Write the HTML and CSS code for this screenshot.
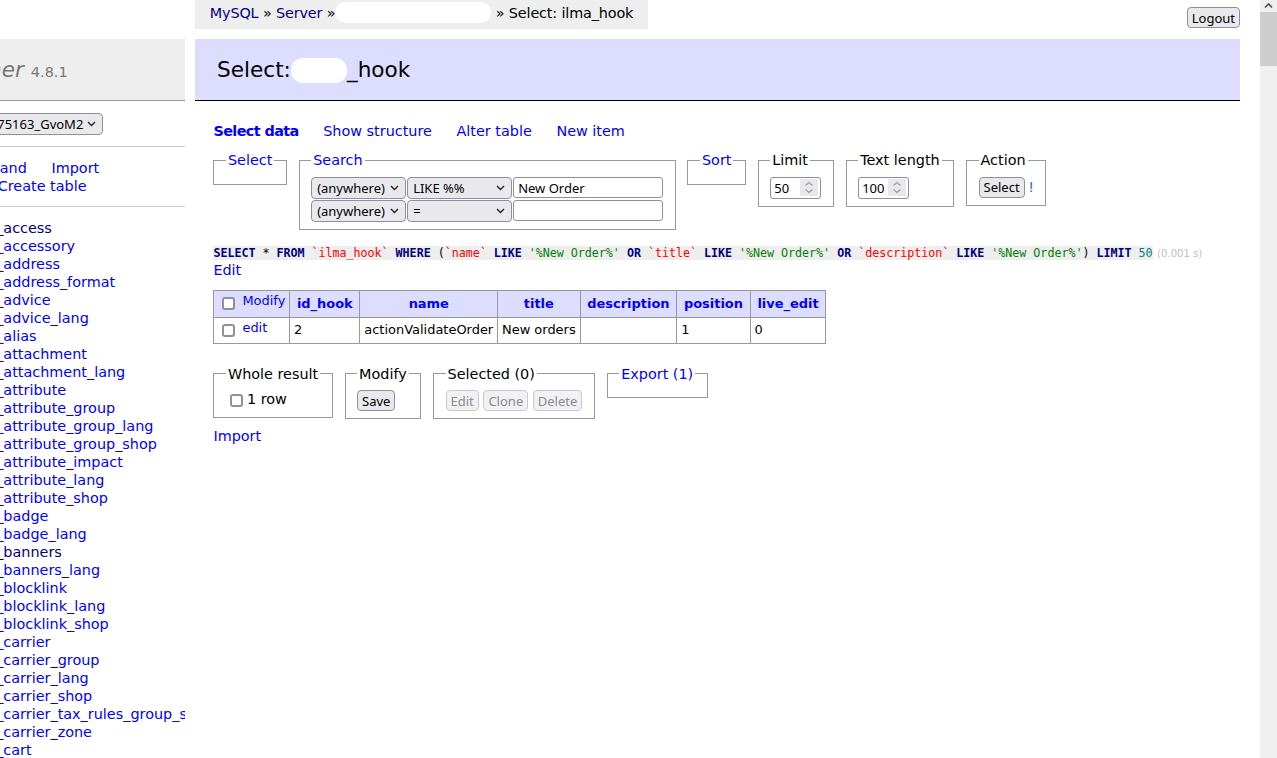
FILE: index.html
```html
<!DOCTYPE html>
<html lang="en">
<head>
<meta charset="utf-8">
<title>Select: ilma_hook - Adminer</title>
<link rel="stylesheet" href="styles.css">
</head>
<body>
<div class="viewport">
  <div class="page">
    <aside class="menu">
      <h1 class="logo"><a href="#" class="brand">Adminer</a> <span class="version">4.8.1</span></h1>
      <form class="menu-p"><select class="ff-select dbsel"><option>usr_web0075163_GvoM2</option></select></form>
      <p class="menu-p links side-links"><a href="#">SQL command</a> <a href="#">Import</a> <a href="#" class="export">Export</a> <a href="#">Create table</a></p>
      <ul class="tables">
        <li><a href="#">select</a> <a href="#" class="v">ilma_access</a></li>
        <li><a href="#">select</a> <a href="#">ilma_accessory</a></li>
        <li><a href="#">select</a> <a href="#">ilma_address</a></li>
        <li><a href="#">select</a> <a href="#">ilma_address_format</a></li>
        <li><a href="#">select</a> <a href="#">ilma_advice</a></li>
        <li><a href="#">select</a> <a href="#">ilma_advice_lang</a></li>
        <li><a href="#">select</a> <a href="#">ilma_alias</a></li>
        <li><a href="#">select</a> <a href="#">ilma_attachment</a></li>
        <li><a href="#">select</a> <a href="#">ilma_attachment_lang</a></li>
        <li><a href="#">select</a> <a href="#">ilma_attribute</a></li>
        <li><a href="#">select</a> <a href="#">ilma_attribute_group</a></li>
        <li><a href="#">select</a> <a href="#">ilma_attribute_group_lang</a></li>
        <li><a href="#">select</a> <a href="#">ilma_attribute_group_shop</a></li>
        <li><a href="#">select</a> <a href="#">ilma_attribute_impact</a></li>
        <li><a href="#">select</a> <a href="#">ilma_attribute_lang</a></li>
        <li><a href="#">select</a> <a href="#">ilma_attribute_shop</a></li>
        <li><a href="#">select</a> <a href="#">ilma_badge</a></li>
        <li><a href="#">select</a> <a href="#">ilma_badge_lang</a></li>
        <li><a href="#">select</a> <a href="#" class="v">ilma_banners</a></li>
        <li><a href="#">select</a> <a href="#">ilma_banners_lang</a></li>
        <li><a href="#">select</a> <a href="#">ilma_blocklink</a></li>
        <li><a href="#">select</a> <a href="#">ilma_blocklink_lang</a></li>
        <li><a href="#">select</a> <a href="#">ilma_blocklink_shop</a></li>
        <li><a href="#">select</a> <a href="#">ilma_carrier</a></li>
        <li><a href="#">select</a> <a href="#">ilma_carrier_group</a></li>
        <li><a href="#">select</a> <a href="#">ilma_carrier_lang</a></li>
        <li><a href="#">select</a> <a href="#">ilma_carrier_shop</a></li>
        <li><a href="#">select</a> <a href="#">ilma_carrier_tax_rules_group_shop</a></li>
        <li><a href="#">select</a> <a href="#">ilma_carrier_zone</a></li>
        <li><a href="#">select</a> <a href="#">ilma_cart</a></li>
        <li><a href="#">select</a> <a href="#">ilma_cart_cart_rule</a></li>
        <li><a href="#">select</a> <a href="#">ilma_cart_product</a></li>
      </ul>
    </aside>
    <main class="content">
      <div class="topbar">
        <p class="breadcrumb"><a href="#" class="v">MySQL</a> » <a href="#" class="v">Server</a> »<span class="redact redact-bc"></span> » Select: ilma_hook</p>
        <form class="logout"><button type="button" class="ff-btn">Logout</button></form>
      </div>
      <h2 class="title">Select:<span class="redact redact-h2"></span>_hook</h2>
      <div class="inner">
        <p class="links tabs"><a href="#" class="active">Select data</a> <a href="#">Show structure</a> <a href="#">Alter table</a> <a href="#">New item</a></p>
        <form class="fieldrow">
          <fieldset><legend><a href="#">Select</a></legend></fieldset>
          <fieldset>
            <legend><a href="#">Search</a></legend>
            <div class="search-body">
              <div class="srow">
                <select class="ff-select s1"><option>(anywhere)</option></select><select class="ff-select s2"><option>LIKE %%</option></select><input class="ff-input s3" type="text" value="New Order">
              </div>
              <div class="srow">
                <select class="ff-select s1"><option>(anywhere)</option></select><select class="ff-select s2"><option>=</option></select><input class="ff-input s3" type="text" value="">
              </div>
            </div>
          </fieldset>
          <fieldset><legend><a href="#">Sort</a></legend></fieldset>
          <fieldset>
            <legend>Limit</legend>
            <span class="num"><input class="num-in" type="text" value="50"><span class="spin"><svg width="18" height="17" viewBox="0 0 18 17"><path d="M5.5 6.5 9 3.5 12.5 6.5M5.5 10.5 9 13.5 12.5 10.5" fill="none" stroke="#9a9aa3" stroke-width="1.2"/></svg></span></span>
          </fieldset>
          <fieldset>
            <legend>Text length</legend>
            <span class="num"><input class="num-in" type="text" value="100"><span class="spin"><svg width="18" height="17" viewBox="0 0 18 17"><path d="M5.5 6.5 9 3.5 12.5 6.5M5.5 10.5 9 13.5 12.5 10.5" fill="none" stroke="#9a9aa3" stroke-width="1.2"/></svg></span></span>
          </fieldset>
          <fieldset>
            <legend>Action</legend>
            <div class="action"><button type="button" class="ff-btn">Select</button> <span class="noindex">!</span></div>
          </fieldset>
        </form>

        <p class="sqlp"><code class="jush"><a href="#" class="kw">SELECT</a> * <a href="#" class="kw">FROM</a> <span class="bac">`ilma_hook`</span> <a href="#" class="kw">WHERE</a> (<span class="bac">`name`</span> <a href="#" class="kw">LIKE</a> <span class="apo">'%New Order%'</span> <a href="#" class="kw">OR</a> <span class="bac">`title`</span> <a href="#" class="kw">LIKE</a> <span class="apo">'%New Order%'</span> <a href="#" class="kw">OR</a> <span class="bac">`description`</span> <a href="#" class="kw">LIKE</a> <span class="apo">'%New Order%'</span>) <a href="#" class="kw">LIMIT</a> <span class="numlit">50</span></code> <span class="time">(0.001 s)</span><br><a href="#">Edit</a></p>

        <table class="results">
          <thead>
            <tr>
              <td class="chk"><input type="checkbox" class="ff-check"> <a href="#" class="mod">Modify</a></td>
              <th><a href="#">id_hook</a></th>
              <th><a href="#">name</a></th>
              <th><a href="#">title</a></th>
              <th><a href="#">description</a></th>
              <th><a href="#">position</a></th>
              <th><a href="#">live_edit</a></th>
            </tr>
          </thead>
          <tbody>
            <tr>
              <td class="chk"><input type="checkbox" class="ff-check"> <a href="#" class="mod">edit</a></td>
              <td>2</td>
              <td>actionValidateOrder</td>
              <td>New orders</td>
              <td></td>
              <td>1</td>
              <td>0</td>
            </tr>
          </tbody>
        </table>

        <form class="fieldrow footer-row">
          <fieldset>
            <legend>Whole result</legend>
            <label class="whole"><input type="checkbox" class="ff-check">1 row</label>
          </fieldset>
          <fieldset>
            <legend>Modify</legend>
            <div><button type="button" class="ff-btn">Save</button></div>
          </fieldset>
          <fieldset>
            <legend>Selected (0)</legend>
            <div class="btns"><button type="button" class="ff-btn" disabled>Edit</button> <button type="button" class="ff-btn" disabled>Clone</button> <button type="button" class="ff-btn" disabled>Delete</button></div>
          </fieldset>
          <fieldset><legend><a href="#">Export (1)</a></legend></fieldset>
        </form>
        <p class="import"><a href="#">Import</a></p>
      </div>
    </main>
  </div>
  <div class="scrollbar">
    <div class="sb-up"><svg width="17" height="12" viewBox="0 0 17 12"><path d="M5 7.5 8.5 4 12 7.5" fill="none" stroke="#505050" stroke-width="1.6"/></svg></div>
    <div class="sb-thumb"></div>
    <div class="sb-track"></div>
  </div>
</div>
</body>
</html>
```

FILE: styles.css
```css
* { box-sizing: border-box; }

html, body {
  margin: 0;
  height: 100%;
  overflow: hidden;
  background: #fff;
}

body {
  font: 14.4px/1.25 "DejaVu Sans", Verdana, sans-serif;
  color: #000;
}

a { color: #00f; text-decoration: none; }
a.v { color: #000080; }

.viewport {
  display: flex;
  height: 758px;
}

.page {
  flex: 1;
  min-width: 0;
  display: flex;
  overflow: hidden;
}

/* ---------- left menu ---------- */
.menu {
  flex: none;
  width: 273.6px;
  margin-left: -89px;
  margin-top: 38.8px;
  overflow: hidden;
}

.logo {
  margin: 0;
  font-size: 21.6px;
  line-height: 27px;
  height: 62.56px;
  padding: 17.28px 21.6px;
  background: #eee;
  border-bottom: 1px solid #999;
  font-weight: normal;
  font-style: italic;
  white-space: nowrap;
}
.logo a { color: #777; }
.version { color: #777; font-size: 67%; font-style: normal; line-height: 1; }

.menu-p {
  margin: 0;
  padding: 11.52px 14.4px;
  border-bottom: 1px solid #ccc;
}

.dbsel { width: 178px; display: block; }

.links a { margin-right: 20px; white-space: nowrap; }

.side-links { padding-left: 11px; }
.side-links .export { margin-right: 24px; }

.tables {
  list-style: none;
  margin: 0;
  padding: 11.52px 14.4px 11.52px 7px;
  white-space: nowrap;
}

/* ---------- content ---------- */
.content {
  flex: 1;
  min-width: 0;
  margin-left: 10.8px;
  padding-right: 20px;
}

.topbar {
  display: flex;
  justify-content: space-between;
  align-items: flex-start;
  height: 28.8px;
}

.breadcrumb {
  margin: 0;
  height: 28.8px;
  line-height: 27px;
  padding: 0 14.4px;
  background: #eee;
  white-space: nowrap;
  letter-spacing: -0.15px;
}

.logout { margin: 7.2px 0 0; }

.redact {
  display: inline-block;
  background: #fff;
  vertical-align: middle;
}
.redact-bc {
  width: 156px;
  height: 21px;
  border-radius: 11px;
  margin-top: -3px;
}
.redact-h2 {
  width: 56px;
  height: 25px;
  border-radius: 12px;
  margin-top: -2px;
}

.title {
  margin: 10px 0 20px;
  font-size: 21.6px;
  line-height: 27px;
  padding: 17.28px 21.6px;
  background: #ddf;
  border-bottom: 1px solid #000;
  font-weight: normal;
}

.inner { padding-left: 18px; }

.tabs { margin: 0; line-height: 20px; }
.tabs .active { font-weight: bold; letter-spacing: -0.6px; }

/* fieldsets */
.fieldrow {
  display: flex;
  align-items: flex-start;
  gap: 11.8px;
  margin: 10px 0 0;
}

fieldset {
  margin: 0;
  padding: 7.2px 11.52px;
  border: 1px solid #999;
  min-width: 0;
}

legend {
  padding: 0 2px;
  line-height: 18px;
}

.search-body {
  display: flex;
  flex-direction: column;
  gap: 1px;
}

.srow {
  display: flex;
  align-items: center;
  gap: 1px;
}

.ff-select {
  -webkit-appearance: none;
  appearance: none;
  height: 22px;
  margin: 0;
  padding: 0 14px 0 5px;
  border: 1px solid #8f8f9d;
  border-radius: 4px;
  background: #e9e9ed url("data:image/svg+xml,%3Csvg xmlns='http://www.w3.org/2000/svg' width='9' height='6'%3E%3Cpath d='M1 1l3.5 3.5L8 1' fill='none' stroke='%23222' stroke-width='1.4'/%3E%3C/svg%3E") no-repeat right 6px center;
  font: 13px "Noto Sans", sans-serif;
  color: #000;
}

.s1 { width: 95px; }
.s2 { width: 105px; }

.ff-input {
  height: 21px;
  margin: 0;
  padding: 0 4px;
  border: 1px solid #8f8f9d;
  border-radius: 3px;
  background: #fff;
  font: 13px "Noto Sans", sans-serif;
  color: #000;
}
.s3 { width: 150px; }

.num {
  display: flex;
  align-items: center;
  width: 51px;
  height: 22px;
  border: 1px solid #8f8f9d;
  border-radius: 3px;
  background: #fff;
  padding-right: 2px;
}

.num-in {
  flex: 1;
  min-width: 0;
  width: 0;
  border: 0;
  padding: 0 0 0 3px;
  margin: 0;
  background: transparent;
  font: 13px "Noto Sans", sans-serif;
  color: #000;
  outline: none;
}

.spin {
  display: flex;
  width: 18px;
  height: 17px;
  background: #e9e9ed;
}

.ff-btn {
  height: 21px;
  margin: 0;
  padding: 0 4px;
  border: 1px solid #8f8f9d;
  border-radius: 4px;
  background: #e9e9ed;
  font: 13px "Noto Sans", sans-serif;
  color: #000;
  vertical-align: middle;
}

.ff-btn:disabled {
  background: #f1f1f4;
  border-color: #c8c8cf;
  color: #8a8a90;
}

.action { white-space: nowrap; }
.noindex { color: #2f6fb6; vertical-align: middle; margin-left: -1px; }

.ff-check {
  -webkit-appearance: none;
  appearance: none;
  width: 13px;
  height: 13px;
  margin: 3px 3px 3px 4px;
  border: 2px solid #8f8f9d;
  border-radius: 3px;
  background: #fff;
  vertical-align: middle;
}

/* SQL */
.sqlp {
  margin: 13px 0 0;
}

.jush {
  font: 11.7px "DejaVu Sans Mono", monospace;
  background: #eee;
  color: #000;
  letter-spacing: -0.03px;
}
.jush .kw { color: #000080; font-weight: bold; }
.jush .bac { color: red; }
.jush .apo { color: green; }
.jush .numlit { color: #007f7f; }

.time { color: silver; font-size: 10.08px; }

/* results table */
.results {
  border-collapse: collapse;
  border-top: 1px solid #999;
  border-left: 1px solid #999;
  font-size: 12.96px;
  line-height: 1.25;
  margin: 11.5px 0 0;
}

.results td,
.results th {
  border-right: 1px solid #999;
  border-bottom: 1px solid #999;
  padding: 3.2px 3.9px 3.4px;
  vertical-align: middle;
  text-align: left;
  white-space: nowrap;
}

.results thead td,
.results thead th { background: #ddf; }

.results thead th {
  text-align: center;
  padding: 3.2px 6.7px 3.4px;
  font-weight: bold;
}

.results .mod { position: relative; top: -2px; }

/* footer */
.footer-row { margin-top: 20.5px; }

.whole { white-space: nowrap; }
.whole .ff-check { margin-right: 4px; }
.btns { white-space: nowrap; }

.import { margin: 8px 0 0; }

/* fake scrollbar */
.scrollbar {
  flex: none;
  width: 17px;
  background: #f0f0f0;
  display: flex;
  flex-direction: column;
}
.sb-up { height: 12px; display: flex; }
.sb-thumb { height: 54px; background: #cdcdcd; }
.sb-track { flex: 1; }
```
